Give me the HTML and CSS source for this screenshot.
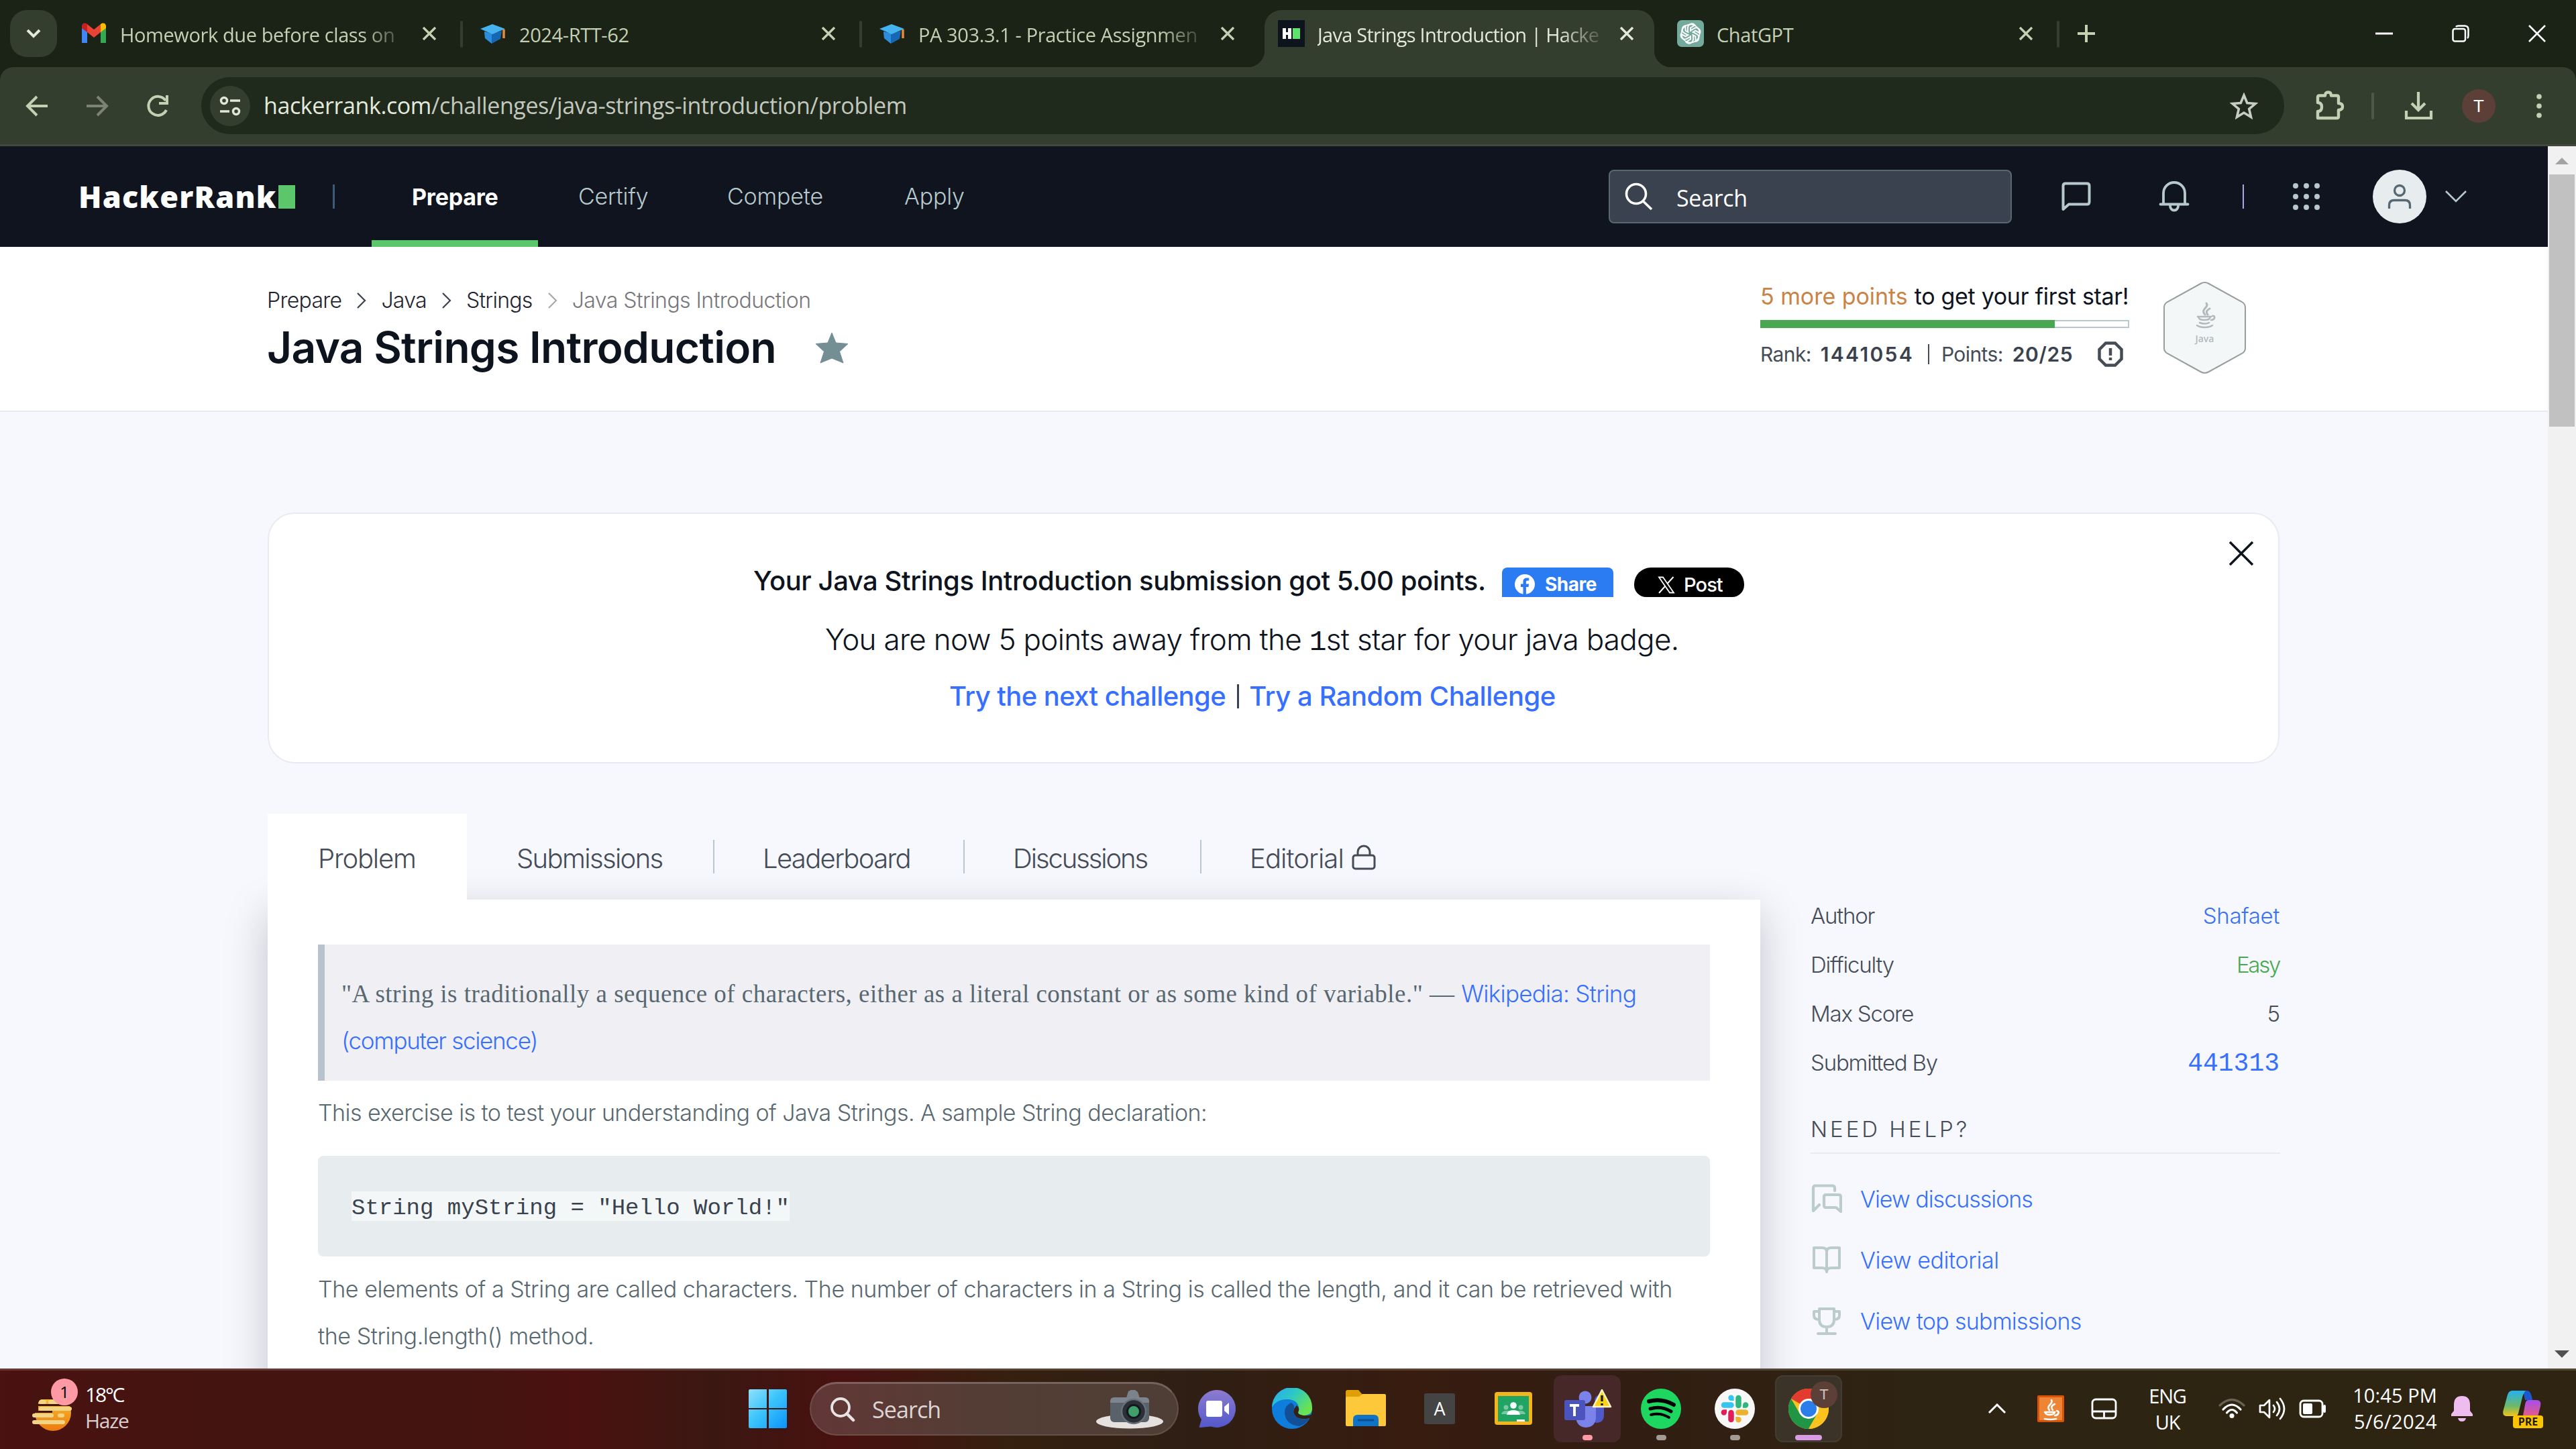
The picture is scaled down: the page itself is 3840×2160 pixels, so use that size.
FILE: index.html
```
<!DOCTYPE html>
<html lang="en">
<head>
<meta charset="utf-8">
<title>Java Strings Introduction | HackerRank</title>
<link rel="stylesheet" href="styles.css">
</head>
<body>
<svg width="0" height="0" class="defs">
  <defs>
    <symbol id="cube" viewBox="0 0 40 40">
      <path d="M7 17 19 20 33 16 31 28 18 35 8 27Z" fill="#1667b4"/>
      <path d="M7 17 18 20 18 35 8 27Z" fill="#2b8ddb"/>
      <path d="M1 13 19 6 38 13 19 21Z" fill="#45b3ee"/>
      <path d="M36 14v13" stroke="#e8883a" stroke-width="3.500"/>
    </symbol>
    <symbol id="close" viewBox="0 0 20 20"><path d="M1 1 19 19M19 1 1 19" stroke="currentColor" stroke-width="3.4"/></symbol>
  </defs>
</svg>

<div class="tabstrip">
  <button class="tab-search"><svg width="22" height="14" viewBox="0 0 22 14"><path d="M2 2 11 11 20 2" fill="none" stroke="#e3e9db" stroke-width="4"/></svg></button>
  <div class="tab">
    <svg class="fav" viewBox="0 0 40 40"><path d="M2 8v26h8V16Z" fill="#4285f4"/><path d="M38 8v26h-8V16Z" fill="#34a853"/><path d="M2 9c0-4 4-6 8-3v12L2 12Z" fill="#c5221f"/><path d="M38 9c0-4-4-6-8-3v12l8-6Z" fill="#fbbc04"/><path d="M10 6 20 14 30 6v12L20 26 10 18Z" fill="#ea4335"/></svg>
    <span class="tab-title fade">Homework due before class on</span><svg class="x"><use href="#close"/></svg>
  </div>
  <div class="tab divided"><svg class="fav"><use href="#cube"/></svg><span class="tab-title">2024-RTT-62</span><svg class="x"><use href="#close"/></svg></div>
  <div class="tab divided"><svg class="fav"><use href="#cube"/></svg><span class="tab-title fade">PA 303.3.1 - Practice Assignmen</span><svg class="x"><use href="#close"/></svg></div>
  <div class="tab active">
    <svg class="fav" viewBox="0 0 40 40"><rect width="40" height="40" fill="#0e141e"/><path d="M7 12h5v6h3v-6h5v16h-5v-6h-3v6H7Z" fill="#fff"/><path d="M22 12h11v16H22Z" fill="#5fe36d"/></svg>
    <span class="tab-title fade">Java Strings Introduction | Hacke</span><svg class="x"><use href="#close"/></svg>
  </div>
  <div class="tab last">
    <svg class="fav" viewBox="0 0 40 40"><rect width="40" height="40" rx="7" fill="#74aa9c"/><g fill="none" stroke="#fff" stroke-width="2"><path id="petal" d="M16 18V11a6 6 0 0 1 10.500-3.500L20 11.500V17"/><use href="#petal" transform="rotate(60 20 20)"/><use href="#petal" transform="rotate(120 20 20)"/><use href="#petal" transform="rotate(180 20 20)"/><use href="#petal" transform="rotate(240 20 20)"/><use href="#petal" transform="rotate(300 20 20)"/><circle cx="20" cy="20" r="13.500" stroke-width="1.600"/></g></svg>
    <span class="tab-title">ChatGPT</span><svg class="x"><use href="#close"/></svg>
  </div>
  <svg class="newtab" width="28" height="28" viewBox="0 0 28 28"><path d="M14 1v26M1 14h26" stroke="#c3d0b4" stroke-width="4"/></svg>
  <div class="winctl">
    <svg width="26" height="26" viewBox="0 0 26 26"><path d="M0 13h26" stroke="#fff" stroke-width="3"/></svg>
    <svg width="26" height="26" viewBox="0 0 26 26"><g fill="none" stroke="#fff" stroke-width="2.500"><rect x="1.500" y="6" width="18.500" height="18.500" rx="3"/><path d="M6 3q1-1.500 4-1.500h9q5.500 0 5.500 5.500v9q0 3-1.500 4"/></g></svg>
    <svg width="26" height="26" viewBox="0 0 26 26"><path d="M1 1 25 25M25 1 1 25" stroke="#fff" stroke-width="2.500"/></svg>
  </div>
</div>

<div class="toolbar-wrap"><div class="toolbar">
  <svg width="40" height="40" viewBox="0 0 40 40"><path d="M36 20H7M20 6 6 20 20 34" fill="none" stroke="#c3d0b4" stroke-width="4"/></svg>
  <svg width="40" height="40" viewBox="0 0 40 40"><path d="M4 20H33M20 6 34 20 20 34" fill="none" stroke="#7b8473" stroke-width="4"/></svg>
  <svg width="40" height="40" viewBox="0 0 40 40"><path d="M33 26A14 14 0 1 1 32 12" fill="none" stroke="#c3d0b4" stroke-width="4"/><path d="M36 4v14H22v-4h10V4Z" fill="#c3d0b4"/></svg>
  <div class="omnibox">
    <span class="site"><svg width="34" height="30" viewBox="0 0 34 30"><g fill="none" stroke="#e0e6d8" stroke-width="3.500"><circle cx="8" cy="7" r="4.500"/><path d="M17 7h15M2 23h14"/><circle cx="26" cy="23" r="4.500"/></g></svg></span>
    <span class="url"><b>hackerrank.com</b>/challenges/java-strings-introduction/problem</span>
    <svg class="star" width="42" height="40" viewBox="0 0 42 40"><path d="M21 4 25.800 15.500 38 16.500 28.700 24.500 31.500 36.500 21 30 10.500 36.500 13.300 24.500 4 16.500 16.200 15.500Z" fill="none" stroke="#c8cdc3" stroke-width="3.600"/></svg>
  </div>
  <svg width="46" height="46" viewBox="0 0 46 46"><path d="M5 10q0-2.500 2.500-2.500H16q0-5 4.500-5t4.500 5h8.500q2.500 0 2.500 2.500v9q6 0 6 5t-6 5v9.500q0 2.500-2.500 2.500H5v-10q6 0 6-6.500T5 18Z" fill="none" stroke="#c3d0b4" stroke-width="4.400" stroke-linejoin="round"/></svg>
  <i class="tb-div"></i>
  <svg width="46" height="42" viewBox="0 0 46 42"><path d="M22 0v26M12 17l10 10 10-10M4 28v11h37V28" fill="none" stroke="#c3d0b4" stroke-width="4.200"/></svg>
  <span class="profile">T</span>
  <svg width="10" height="40" viewBox="0 0 10 40"><g fill="#c3d0b4"><circle cx="5" cy="6" r="3.800"/><circle cx="5" cy="20" r="3.800"/><circle cx="5" cy="34" r="3.800"/></g></svg>
</div></div>

<div class="viewport">
  <main class="page">
    <nav class="nav">
      <div class="logo">HackerRank<i></i></div>
      <i class="nav-div"></i>
      <a class="nav-link on">Prepare</a>
      <a class="nav-link">Certify</a>
      <a class="nav-link">Compete</a>
      <a class="nav-link">Apply</a>
      <div class="search"><svg width="42" height="42" viewBox="0 0 42 42"><g fill="none" stroke="#fff" stroke-width="3.600"><circle cx="17" cy="17" r="14.500"/><path d="M27.500 28 40 40"/></g></svg><span>Search</span></div>
      <svg width="44" height="44" viewBox="0 0 44 44"><path d="M2.500 41V6q0-3.500 3.500-3.500h32q3.500 0 3.500 3.500v24q0 3.500-3.500 3.500H11Z" fill="none" stroke="#b7c9cc" stroke-width="4" stroke-linejoin="round"/></svg>
      <svg width="46" height="46" viewBox="0 0 46 46"><g fill="none" stroke="#b7c9cc" stroke-width="3.800" stroke-linecap="round"><path d="M2.500 34.500h41M7 34V18a16 16 0 0 1 32 0v16M17 37a6 6.500 0 0 0 12 0"/></g></svg>
      <i class="nav-div lilac"></i>
      <svg width="42" height="42" viewBox="0 0 42 42"><g fill="#b7c9cc"><circle cx="5" cy="5" r="4"/><circle cx="21" cy="5" r="4"/><circle cx="37" cy="5" r="4"/><circle cx="5" cy="21" r="4"/><circle cx="21" cy="21" r="4"/><circle cx="37" cy="21" r="4"/><circle cx="5" cy="37" r="4"/><circle cx="21" cy="37" r="4"/><circle cx="37" cy="37" r="4"/></g></svg>
      <span class="avatar"><svg width="36" height="40" viewBox="0 0 36 40"><g fill="none" stroke="#576871" stroke-width="3.300"><circle cx="18" cy="11" r="7.500"/><path d="M2.500 38v-5q0-7.500 7.500-7.500h16q7.500 0 7.500 7.500v5"/></g></svg></span>
      <svg width="34" height="20" viewBox="0 0 34 20"><path d="M2 2 17 17 32 2" fill="none" stroke="#b7c9cc" stroke-width="2.600"/></svg>
    </nav>

    <header class="head">
      <div class="head-left">
        <div class="crumbs">
          <span>Prepare</span><svg viewBox="0 0 14 24"><path d="M1 1 12 12 1 23"/></svg>
          <span>Java</span><svg viewBox="0 0 14 24"><path d="M1 1 12 12 1 23"/></svg>
          <span>Strings</span><svg class="dim" viewBox="0 0 14 24"><path d="M1 1 12 12 1 23"/></svg>
          <span class="dim">Java Strings Introduction</span>
        </div>
        <div class="title"><h1>Java Strings Introduction</h1><svg width="52" height="48" viewBox="0 0 52 48"><path d="M26 2 32 17 50 18.500 37.500 30 43 47 26 40 9 47 14.500 30 2 18.500 20 17Z" fill="#738f93" stroke="#738f93" stroke-linejoin="round"/></svg></div>
      </div>
      <div class="rank">
        <div class="more"><span>5 more points</span><b>to get your first star!</b></div>
        <div class="progress"><i style="width:80.4%"></i></div>
        <div class="stats"><span>Rank:</span><b class="r">1441054</b><i></i><span>Points:</span><b>20/25</b><svg width="38" height="38" viewBox="0 0 38 38"><path d="M12 2.500h14L35.500 12v14L26 35.500H12L2.500 26V12Z" fill="none" stroke="#454c58" stroke-width="4.500"/><path d="M19 10v11M19 24v4" stroke="#454c58" stroke-width="4.500"/></svg></div>
      </div>
      <div class="badge">
        <svg width="127" height="139" viewBox="0 0 127 139"><path d="M58 3.500q5.500-3 11 0L119 31q5 3 5 8v61q0 5-5 8L69 135.500q-5.500 3-11 0L8 108q-5-3-5-8V39q0-5 5-8Z" fill="#f3f7f8" stroke="#999d9e" stroke-width="2"/>
        <g fill="none" stroke="#b4b9bb" stroke-width="2.600" stroke-linecap="round"><path d="M66 33c5 6-10 9-2 17M71 41c-5 3-6 5-3 9" stroke-width="3"/><path d="M53 53h20M54 53c1 4 3 5 9 5s8-1 9-5M75 52c5-1 4 6-2 6M56 62c4 2 11 2 14 0M52 66c6 4 17 4 23 0"/></g></svg>
        <span>Java</span>
      </div>
    </header>

    <section class="banner">
      <div class="banner-lines">
        <p class="l1"><b>Your Java Strings Introduction submission got 5.00 points.</b>
          <span class="fb"><svg width="30" height="30" viewBox="0 0 30 30"><circle cx="15" cy="15" r="15" fill="#fff"/><path d="M12.500 30V19H9v-4.500h3.500V11q0-5.500 5.500-5.500h3.200v4H18.800q-1.900 0-1.900 2v3h4.200L20.500 19h-3.600v11Z" fill="#2b7bf3"/></svg>Share</span>
          <span class="xp"><svg width="26" height="26" viewBox="0 0 26 26"><g fill="none" stroke="#fff"><path d="M2 1.500h6L24 24.500h-6Z" stroke-width="1.800"/><path d="M2 25 11.500 14.500M14.500 11 23.500 1" stroke-width="2"/></g></svg>Post</span></p>
        <p class="l2"><span>You are now 5 points away from the <span class="one">1</span>st star for your java badge.</span></p>
        <p class="l3"><a class="a1">Try the next challenge</a><i></i><a>Try a Random Challenge</a></p>
      </div>
      <svg class="dismiss" width="38" height="38" viewBox="0 0 38 38"><path d="M2 2 36 36M36 2 2 36" stroke="#0e141e" stroke-width="3.500"/></svg>
    </section>

    <div class="tabs">
      <a class="cur">Problem</a>
      <a class="sub">Submissions</a><i></i>
      <a class="lead">Leaderboard</a><i></i>
      <a class="disc">Discussions</a><i></i>
      <a class="edit">Editorial<svg width="36" height="38" viewBox="0 0 36 38"><g fill="none" stroke="#454c58" stroke-width="3"><rect x="2" y="16" width="32" height="20" rx="3.500"/><path d="M9 16v-5a9 9 0 0 1 18 0v5"/></g></svg></a>
    </div>

    <div class="body">
      <article class="card">
        <blockquote><span>"A string is traditionally a sequence of characters, either as a literal constant or as some kind of variable." —</span> <a>Wikipedia: String</a><br><a class="cs">(computer science)</a></blockquote>
        <p class="ex">This exercise is to test your understanding of Java Strings. A sample String declaration:</p>
        <pre><code>String myString = "Hello World!"</code></pre>
        <p class="el">The elements of a String are called characters. The number of characters in a String is called the length, and it can be retrieved with<br>the String.length() method.</p>
      </article>
      <aside class="side">
        <dl>
          <div><dt>Author</dt><dd class="blue s1">Shafaet</dd></div>
          <div><dt>Difficulty</dt><dd class="green">Easy</dd></div>
          <div><dt>Max Score</dt><dd>5</dd></div>
          <div><dt>Submitted By</dt><dd class="blue num">441313</dd></div>
        </dl>
        <h3>NEED HELP?</h3>
        <ul>
          <li><svg viewBox="0 0 46 44"><g fill="none" stroke="#bccccd" stroke-width="4.200" stroke-linejoin="round" stroke-linecap="round"><path d="M35 10V6q0-3.500-3.500-3.500H6Q3 2.500 3 6v34l9-9"/><path d="M44 41V19q0-3-3-3H22q-3 0-3 3v13q0 3 3 3h15Z"/></g></svg><a class="v1">View discussions</a></li>
          <li><svg viewBox="0 0 46 44"><path d="M4 4h12q7 0 7 6 0-6 7-6h12v30H30q-7 0-7 6 0-6-7-6H4ZM23 10v30" fill="none" stroke="#bccccd" stroke-width="4" stroke-linejoin="round"/></svg><a>View editorial</a></li>
          <li><svg viewBox="0 0 46 44"><g fill="none" stroke="#bccccd" stroke-width="4" stroke-linejoin="round" stroke-linecap="round"><path d="M12 4h22v16q0 11-11 11T12 20ZM12 8H4v6q0 6 8 6M34 8h8v6q0 6-8 6M23 31v9M10 41h26"/></g></svg><a class="v3">View top submissions</a></li>
        </ul>
      </aside>
    </div>
  </main>
  <div class="scrollbar"><i class="up"></i><i class="thumb"></i><i class="down"></i></div>
</div>

<footer class="taskbar">
  <div class="weather"><svg width="60" height="66" viewBox="0 0 60 66"><defs><linearGradient id="sun" x1="0" y1="0" x2="0" y2="1"><stop offset="0" stop-color="#f8c62c"/><stop offset="1" stop-color="#ee7a12"/></linearGradient></defs><circle cx="31" cy="36" r="27" fill="url(#sun)"/><g stroke="#f0d488" stroke-width="6" stroke-linecap="round"><path d="M13 20h5M27 20h10M13 30h43M3 40h26M41 40h4M3 50h43" /></g><path d="M0 0h60v16H0ZM0 17h9v18H0ZM0 23h60v3H10ZM0 33h30v3H0Z" fill="#451310"/></svg><b>1</b></div>
  <div class="wtext"><span class="w1">18°C</span><span class="w2">Haze</span></div>
  <svg width="60" height="60" viewBox="0 0 60 60"><defs><linearGradient id="win" x1="0" y1="0" x2="1" y2="1"><stop offset="0" stop-color="#8fe0fc"/><stop offset=".45" stop-color="#3ec5fb"/><stop offset="1" stop-color="#0a93fb"/></linearGradient></defs><path d="M3 1h25v28H1V3q0-2 2-2ZM31 1h25q2 0 2 2v26H31ZM1 31h27v28H3q-2 0-2-2ZM31 31h27v26q0 2-2 2H31Z" fill="url(#win)"/></svg>
  <div class="tsearch"><svg width="38" height="38" viewBox="0 0 38 38"><g fill="none" stroke="#e9e4e4" stroke-width="3.800"><circle cx="16" cy="16" r="13"/><path d="M25.500 25.500 35 35" stroke-width="4.500" stroke-linecap="round"/></g></svg><span>Search</span>
    <svg class="cam" width="102" height="60" viewBox="0 0 102 60"><ellipse cx="51" cy="48" rx="50" ry="10.500" fill="#e6e1df"/><path d="M49 3l4-2h6l4 3 3 9H46Z" fill="#7b828b"/><rect x="22" y="12" width="58" height="37" rx="6" fill="#59616b"/><path d="M22 18q0-6 6-6h46q6 0 6 6v2H22Z" fill="#7e858e"/><circle cx="57" cy="33" r="18" fill="#2b3038" stroke="#69717a" stroke-width="2.500"/><circle cx="57" cy="33" r="9.500" fill="#3fa06a" stroke="#12181b" stroke-width="3"/></svg></div>
  <svg width="60" height="60" viewBox="0 0 60 60"><defs><linearGradient id="chat" x1="0" y1="0" x2="0" y2="1"><stop offset="0" stop-color="#8d7bcf"/><stop offset="1" stop-color="#5358cb"/></linearGradient></defs><path d="M30 2a28 28 0 1 1-10 54.500L4 58q-2 0-1-2l3-10A28 28 0 0 1 30 2Z" fill="url(#chat)"/><rect x="13" y="18" width="24" height="24" rx="3" fill="#fff"/><path d="M40 27l7-6v18l-7-6Z" fill="#fff"/></svg>
  <svg width="62" height="62" viewBox="0 0 62 62"><defs><linearGradient id="edgeA" x1="0" y1="0" x2="1" y2=".6"><stop offset="0" stop-color="#2aa8f5"/><stop offset=".5" stop-color="#2cc8c4"/><stop offset="1" stop-color="#6be34f"/></linearGradient></defs><circle cx="31" cy="31" r="30" fill="#0f7ddb"/><path d="M1 29A30 30 0 0 1 61 29q1 11-12 12-12 0-8-7c2-12-8-18-18-17Q8 17 1 29Z" fill="url(#edgeA)"/><path d="M30 22q-10 4-10 15 1 18 22 20 10-3 15-12-10 4-18-1-9-5-5-14 1-5-4-8Z" fill="#134f96"/><path d="M34 31q-3 8 5 13 8 4 18 1l5 8V39q-10 4-18 1-6-2-3-6 1-5-3-8Z" fill="#342014"/></svg>
  <svg width="60" height="56" viewBox="0 0 60 56"><path d="M0 3q0-3 3-3h16l6 7v10H0Z" fill="#e0a005"/><path d="M0 12q0-2 2-2h18l5-4h33q2 0 2 2v44q0 2-2 2H2q-2 0-2-2Z" fill="#fdc83a"/><path d="M11 54V44q0-7 7-7h24q7 0 7 7v10Z" fill="#0f74c6"/><path d="M19 45h22" stroke="#0b4f93" stroke-width="3" stroke-linecap="round"/></svg>
  <div class="tile">A</div>
  <svg width="56" height="50" viewBox="0 0 56 50"><rect width="56" height="49" rx="4" fill="#f3b51b"/><rect x="5" y="6" width="46" height="38" fill="#1fa463"/><g fill="#7cc8a2"><circle cx="17" cy="23" r="3.500"/><circle cx="39" cy="23" r="3.500"/><path d="M10 33q1-5 8-5h20q7 0 8 5Z"/></g><circle cx="28" cy="20" r="4.800" fill="#fff"/><path d="M18 34q1-7 10-7t10 7Z" fill="#fff"/><path d="M33 41h12v3H33Z" fill="#fff"/></svg>
  <div class="app teams"><svg width="74" height="60" viewBox="0 0 74 60"><circle cx="34" cy="13" r="9.500" fill="#7b83eb"/><circle cx="55" cy="17" r="7" fill="#5059c9"/><path d="M46 26h16v14q0 10-10 11-6 0-6-6Z" fill="#5059c9"/><path d="M20 26h30v16q0 15-15 16-14-1-15-16Z" fill="#7b83eb"/><rect x="3" y="17" width="31" height="30" rx="3" fill="#4b53bc"/><path d="M11 25h14M18 25v16" stroke="#fff" stroke-width="4"/><path d="M59 2 72 27H46Z" fill="#fcd116" stroke="#fbf3c6" stroke-width="2.500" stroke-linejoin="round"/><path d="M59 10v9M59 22v3" stroke="#222" stroke-width="3.500"/></svg><i></i></div>
  <div class="app"><svg width="60" height="60" viewBox="0 0 60 60"><circle cx="30" cy="30" r="30" fill="#1ed760"/><g fill="none" stroke="#000" stroke-linecap="round"><path d="M12 19q19-5 37 5" stroke-width="6"/><path d="M14 30q16-5 31 4" stroke-width="5"/><path d="M15 39q14-4 27 4" stroke-width="4"/></g></svg><i></i></div>
  <div class="app"><svg width="60" height="60" viewBox="0 0 60 60"><circle cx="30" cy="30" r="30" fill="#f7f7f7"/><g stroke-width="8.500" stroke-linecap="round"><path d="M35.500 14v11" stroke="#2eb67d"/><path d="M14 24.500h10.500" stroke="#36c5f0"/><path d="M24.500 36v10" stroke="#e01e5a"/><path d="M35.500 35.500h10.500" stroke="#ecb22e"/></g><path d="M28.700 18h-4.200a4.200 4.200 0 1 1 4.200-4.200Z" fill="#36c5f0"/><path d="M42 28.700v-4.200a4.200 4.200 0 1 1 4.200 4.200Z" fill="#2eb67d"/><path d="M18 31.300v4.200a4.200 4.200 0 1 1-4.200-4.200Z" fill="#e01e5a"/><path d="M31.300 42h4.200a4.200 4.200 0 1 1-4.200 4.200Z" fill="#ecb22e"/></svg><i></i></div>
  <div class="app chrome"><svg width="60" height="60" viewBox="0 0 60 60"><circle cx="30" cy="30" r="30" fill="#fcc31e"/><path d="M30 30 4 15A30 30 0 0 1 56 15H30Z" fill="#e33b2e"/><path d="M30 60A30 30 0 0 1 4 15L17 37.500 30 45 43 37.500Z" fill="#219546"/><path d="M30 15h26a30 30 0 0 1-26 45L43 37.500Z" fill="#fcc31e"/><circle cx="30" cy="30" r="15" fill="#fff"/><circle cx="30" cy="30" r="12" fill="#2b7de9"/></svg><b>T</b><i></i></div>
  <svg width="28" height="16" viewBox="0 0 28 16"><path d="M2 14 14 2 26 14" fill="none" stroke="#fff" stroke-width="3"/></svg>
  <svg width="40" height="40" viewBox="0 0 40 40"><rect width="40" height="40" rx="2" fill="#d9540a"/><rect x="3" y="3" width="34" height="34" fill="#ee8534"/><g fill="none" stroke="#fff" stroke-width="2.600" stroke-linecap="round"><path d="M21 7c4 6-9 8-3 15M26 13c-5 2-6 5-3 9M11 25h15c-1 5-13 5-14 1M29 23c5 1 2 7-3 7M11 35q8 2 17 0"/></g></svg>
  <svg width="40" height="32" viewBox="0 0 40 32"><g fill="none" stroke="#fff" stroke-width="2.800"><rect x="2" y="2" width="35" height="28" rx="5"/><path d="M2 20h35M19.500 20v10"/></g></svg>
  <div class="lang"><span>ENG</span><span>UK</span></div>
  <svg width="42" height="32" viewBox="0 0 42 32"><g fill="none" stroke="#fff" stroke-width="3.200" stroke-linecap="round"><path d="M2 11Q20-6 38 11" stroke="#6a6156"/><path d="M7 17Q20 3 33 17M12.500 22Q20 13 27.500 22"/></g><circle cx="20" cy="26.500" r="3.500" fill="#fff"/></svg>
  <svg width="42" height="36" viewBox="0 0 42 36"><g fill="none" stroke="#fff" stroke-width="2.700" stroke-linejoin="round" stroke-linecap="round"><path d="M2 13v10h6l8 8V5l-8 8ZM22 13q4 5 0 10M27 8q8 10 0 20M32 3q12 15 0 30"/></g></svg>
  <svg width="42" height="30" viewBox="0 0 42 30"><g fill="none" stroke="#fff" stroke-width="2.800"><rect x="2" y="3" width="33" height="24" rx="5"/></g><rect x="6" y="7" width="14" height="16" rx="2" fill="#fff"/><path d="M38 11v8" stroke="#fff" stroke-width="4" stroke-linecap="round"/></svg>
  <div class="clock"><span>10:45 PM</span><span class="date">5/6/2024</span></div>
  <svg width="34" height="40" viewBox="0 0 34 40"><path d="M17 1q12 0 12 13v9l4 5v3H1v-3l4-5v-9Q5 1 17 1ZM11 34h12q-1 5-6 5t-6-5Z" fill="#efbcf0"/></svg>
  <div class="copilot"><svg width="60" height="46" viewBox="0 0 60 46"><defs><linearGradient id="cpA" x1="0" y1="0" x2="0" y2="1"><stop offset="0" stop-color="#22b3f2"/><stop offset=".6" stop-color="#6cb86a"/><stop offset="1" stop-color="#f5c518"/></linearGradient><linearGradient id="cpB" x1="0" y1="0" x2="0" y2="1"><stop offset="0" stop-color="#a44df0"/><stop offset="1" stop-color="#f2606c"/></linearGradient></defs><path d="M30 0h6q6 0 8 14H33Z" fill="#1c59d0"/><path d="M14 0h20q-4 4-6 14l-5 20q-1 4-5 4H6q-8 0-5-10L7 6q2-6 7-6Z" fill="url(#cpA)"/><path d="M38 14h12q8 0 6 9l-5 20H29l4-22q1-7 5-7Z" fill="url(#cpB)"/></svg><b>PRE</b></div>
</footer>
</body>
</html>
```
FILE: styles.css
```
* { box-sizing: border-box; }
body { margin: 0; width: 3840px; height: 2160px; overflow: hidden; background: #f6f8fd; font-family: Inter, "Liberation Sans", sans-serif; white-space: nowrap; }
p, h1, h3, ul, dl, dd, pre, blockquote { margin: 0; padding: 0; }
svg { display: block; flex: none; }
.defs { position: absolute; }

/* Browser tab strip */
.tabstrip { display: flex; align-items: center; height: 100px; background: #1a2315; color: #c3d0b4; font-family: "Open Sans", "Noto Sans", sans-serif; font-size: 29px; }
.tab-search { display: flex; align-items: center; justify-content: center; width: 70px; height: 70px; margin: 0 7.5px 0 15px; padding: 0; border: 0; border-radius: 25px; background: #343e2e; }
.tab { position: relative; display: flex; align-items: center; flex: none; width: 595px; height: 100px; padding-left: 27.5px; }
.fav { width: 40px; height: 40px; margin-right: 19px; }
.tab-title { flex: none; width: 424px; margin-top: 4px; line-height: 44px; letter-spacing: -.4px; }
.active .tab-title { letter-spacing: -.75px; }
.fade { -webkit-mask-image: linear-gradient(90deg, #000 85%, transparent 102%); mask-image: linear-gradient(90deg, #000 85%, transparent 102%); }
.x { width: 20px; height: 20px; margin-left: 26.500px; }
.divided::before, .last::after { content: ""; position: absolute; left: -2px; top: 31px; width: 4px; height: 40px; border-radius: 2px; background: #343e2e; }
.last::after { left: auto; right: -2px; }
.active { color: #e3e9db; }
.active::before { content: ""; position: absolute; z-index: 0; left: 7px; right: 7px; top: 15px; bottom: 0; border-radius: 25px 25px 0 0; background: #343e2e; }
.active::after { content: ""; position: absolute; left: -18px; right: -18px; bottom: 0; height: 25px; background: radial-gradient(circle at 0 0, transparent 25px, #343e2e 25.500px) left / 25px 25px no-repeat, radial-gradient(circle at 100% 0, transparent 25px, #343e2e 25.500px) right / 25px 25px no-repeat; }
.active > * { position: relative; }
.newtab { margin-left: 28px; }
.winctl { display: flex; gap: 88px; margin-left: auto; margin-right: 45px; }

/* Browser toolbar */
.toolbar-wrap { background: #1a2315; }
.toolbar { display: grid; align-items: center; grid-template-columns: 90px 90px 85px 3150px 85px 48px 87px 110px 1fr; height: 118px; padding-left: 35px; border-bottom: 3px solid #43483f; border-radius: 20px 20px 0 0; background: #343e2e; }
.omnibox { display: flex; align-items: center; width: 3105px; height: 85px; padding: 0 39px 0 13px; border-radius: 43px; background: #1f291c; }
.site { display: flex; align-items: center; justify-content: center; width: 60px; height: 60px; border-radius: 50%; background: #343e2e; }
.url { margin: 0 0 1px 20px; color: #c3c8be; font: 34px "Open Sans", "Noto Sans", sans-serif; letter-spacing: -.4px; }
.url b { font-weight: 400; color: #e3e9db; }
.star { margin-left: auto; }
.tb-div { width: 4px; height: 40px; border-radius: 2px; background: #4d5847; }
.profile { width: 50px; height: 50px; border-radius: 50%; background: #5c4038; color: #fff; text-align: center; font: 26px/50px "Liberation Sans", sans-serif; }

/* Page frame */
.viewport { display: flex; height: 1822px; overflow: hidden; }
.page { width: 3798px; height: 1822px; overflow: hidden; }
.scrollbar { display: flex; flex-direction: column; align-items: center; width: 42px; background: #f1f1f1; }
.scrollbar i { display: block; }
.up { margin-top: 17px; border: 10px solid transparent; border-top: 0; border-bottom: 10px solid #a3a3a3; }
.thumb { width: 38px; height: 376px; margin-top: 15px; background: #c1c1c1; }
.down { margin-top: auto; margin-bottom: 16px; border: 11px solid transparent; border-bottom: 0; border-top: 11px solid #505050; }

/* Site navigation */
.nav { display: grid; grid-template-columns: 379px 58px 308px 222px 264px 1050px 675px 145px 125px 74px 120px 107px 1fr; grid-template-rows: 150px; align-items: center; height: 150px; padding-left: 117px; background: #0f141e; color: #b7c9cc; font-size: 34px; font-weight: 300; }
.logo { display: flex; align-items: center; color: #fff; font: 800 45px/60px "Open Sans", sans-serif; letter-spacing: 1.200px; }
.logo i { flex: none; width: 25px; height: 35px; margin-left: 2px; background: #5bc66a; }
.nav-div { width: 3px; height: 36px; background: #3d5b78; }
.nav-div.lilac { background: #a5a9e8; width: 2px; }
.nav-link { line-height: 152px; letter-spacing: -.2px; }
.nav-link.on { width: 248px; height: 150px; padding-left: 60px; border-bottom: 10px solid #5bc66a; color: #fff; font-weight: 700; }
.search { display: flex; align-items: center; width: 601px; height: 80px; padding-left: 22px; border: 2px solid #576871; border-radius: 8px; background: #39424e; color: #fff; font: 34px "Open Sans", sans-serif; letter-spacing: -.3px; }
.search span { margin-left: 35px; margin-top: 3px; }
.avatar { display: flex; align-items: center; justify-content: center; width: 80px; height: 80px; border-radius: 50%; background: #e7ecef; }

/* Challenge heading */
.head { display: flex; height: 246px; padding-left: 398px; border-bottom: 2px solid #e7eaf3; background: #fff; }
.head-left { width: 2226px; padding-top: 60px; }
.crumbs { display: flex; align-items: center; height: 40px; color: #1f2530; font-size: 32px; line-height: 40px; font-weight: 300; letter-spacing: -.7px; }
.crumbs svg { width: 14px; height: 24px; margin: 0 22px 0 23px; fill: none; stroke: #39424e; stroke-width: 2.200px; }
.crumbs svg.dim { stroke: #a9a9ad; }
.crumbs .dim { color: #77777c; letter-spacing: -.55px; }
.title { display: flex; align-items: center; margin-top: 10px; height: 80px; }
.title h1 { width: 816px; color: #0e141e; font-size: 64px; line-height: 80px; font-weight: 600; letter-spacing: -.7px; }
.rank { width: 550px; padding-top: 54px; }
.more { display: flex; height: 40px; line-height: 40px; font-size: 34px; letter-spacing: -.05px; color: #c98347; }
.more b { margin-left: 10px; font-weight: 400; letter-spacing: -.3px; color: #0e141e; }
.progress { height: 12px; margin: 15px 0 19px; border: 2px solid #b7c9cc; }
.progress i { display: block; height: 12px; margin: -2px; background: #49a84f; }
.stats { display: flex; align-items: center; height: 40px; color: #454c58; font-size: 30px; line-height: 40px; letter-spacing: -.6px; }
.stats b { margin: 0 24px 0 14px; color: #39424e; font-weight: 600; letter-spacing: .6px; }
.stats .r { margin-right: 21px; letter-spacing: 2.300px; }
.stats i { width: 2px; height: 30px; margin-right: 18px; background: #454c58; }
.stats svg { margin-left: 13px; }
.badge { position: relative; width: 127px; height: 139px; margin: 51px 0 0 49px; }
.badge span { position: absolute; left: 0; right: 0; top: 76px; text-align: center; color: #b4b9bb; font: 600 14px/20px "Open Sans", sans-serif; }

/* Submission result */
.banner { display: flex; width: 2999px; height: 374px; margin: 150px 0 0 399px; border: 2px solid #e9ebf2; border-radius: 40px; background: #fff; color: #0e141e; }
.banner-lines { width: 2921px; padding-top: 70px; }
.banner-lines p { display: flex; align-items: center; height: 60px; line-height: 60px; }
.l1 { padding-left: 722px; }
.l1 b { width: 1116px; font-size: 40px; font-weight: 500; letter-spacing: -.43px; }
.fb, .xp { display: flex; align-items: center; height: 44px; margin-top: 3px; color: #fff; }
.fb { width: 166px; padding: 6px 0 0 19px; gap: 15px; border-radius: 8px 8px 0 0; background: #2b7bf3; font-size: 28px; font-weight: 700; letter-spacing: -.5px; }
.xp { width: 164px; margin-left: 31px; padding: 8px 0 0 35px; gap: 13px; overflow: hidden; border-radius: 25px 25px 18px 18px; background: #000; font-size: 29px; font-weight: 500; letter-spacing: -.9px; }
.l2 { margin-top: 27px; padding-left: 829px; font-size: 44px; font-weight: 300; letter-spacing: -.7px; }
.one { font: 43px/1 "Liberation Mono", monospace; }
.l3 { margin-top: 25px; padding-left: 1014px; color: #3770ff; font-size: 40px; font-weight: 500; letter-spacing: -.45px; }
.l3 .a1 { letter-spacing: -.6px; }
.l3 i { width: 3px; height: 36px; margin: 0 15px 0 17px; background: #39424e; }
.dismiss { margin-top: 40px; }

/* Tabs */
.tabs { position: relative; z-index: 1; display: grid; grid-template-columns: 371px 293px 74px 299px 74px 279px 74px 400px; grid-template-rows: 128px; align-items: center; width: 2225px; height: 128px; margin: 75px 0 0 399px; color: #454c58; font-size: 40px; font-weight: 300; line-height: 60px; letter-spacing: -1.650px; }
.tabs a { padding-top: 6px; }
.tabs .cur { width: 297px; height: 128px; padding: 37px 0 0 75px; background: #fff; letter-spacing: -1.200px; }
.tabs i { width: 2px; height: 50px; background: #b7c9cc; }
.tabs .disc { letter-spacing: -2.100px; }
.tabs .edit { display: flex; align-items: center; gap: 12px; letter-spacing: -.9px; }
.edit svg { margin-bottom: 4px; }

/* Problem statement */
.body { display: flex; margin-left: 399px; }
.card { width: 2225px; height: 800px; padding: 67px 75px 0; background: #fff; box-shadow: 0 20px 60px rgba(20, 20, 30, .22); color: #576871; font-size: 34px; font-weight: 300; line-height: 70px; }
blockquote { height: 203px; padding: 39px 0 0 25px; border-left: 10px solid #b8c3cb; background: #f0eff4; font: 37px/70px "Liberation Serif", serif; letter-spacing: .48px; }
blockquote a { color: #3770ff; font: 300 35px/1 Inter, sans-serif; letter-spacing: -.75px; }
blockquote .cs { letter-spacing: -1.300px; }
.ex { margin: 13px 0 29px; letter-spacing: -.56px; }
.el { margin-top: 14px; letter-spacing: -.44px; }
pre { display: flex; height: 150px; padding: 53px 0 0 50px; border-radius: 8px; background: #e7ecef; }
code { height: 44px; background: #f3f7f8; color: #39424e; font: 34px/50px "Liberation Mono", monospace; }

/* Sidebar */
.side { width: 700px; margin-left: 75px; color: #454c58; font-size: 33px; font-weight: 300; }
.side dl { display: grid; gap: 25px; }
.side dl div { display: flex; justify-content: space-between; height: 48px; line-height: 49px; letter-spacing: -1.200px; }
.side dd { margin-right: 1px; }
.blue { color: #3770ff; }
.s1 { letter-spacing: -.3px; }
.green { color: #49a84f; letter-spacing: -2.300px; }
.num { font: 38px/52px "Liberation Mono", monospace; letter-spacing: 0; }
.side h3 { margin-top: 50px; padding-bottom: 10px; border-bottom: 2px solid #e7eaee; font-size: 33px; line-height: 50px; font-weight: 300; letter-spacing: 4px; }
.side ul { display: grid; gap: 41px; margin-top: 42px; list-style: none; }
.side li { display: flex; align-items: center; height: 50px; color: #3770ff; font-size: 34px; letter-spacing: -.4px; }
.side li svg { width: 46px; height: 44px; margin: 0 27px 0 1px; }
.v1 { letter-spacing: -1px; }
.v3 { letter-spacing: -.7px; }

/* Windows taskbar */
.taskbar { position: relative; z-index: 2; display: grid; grid-template-columns: 79px 988px 92px 578px 110px 111px 117px 105px 88px 110px 110px 110px 317px 74px 80px 83px 107px 60px 60px 76px 150px 78px 1fr; align-items: center; height: 120px; padding: 0 0 3px 48px; border-top: 3px solid rgba(255, 255, 255, .16); background: linear-gradient(90deg, #4a1210, #441410 300px, #441411 700px, #4a1110 850px, #3b1711 1060px, #481110 1260px, #36200f 1500px, #2f1f14 1750px, #381c10 2100px, #321d12 2400px, #2e2413 2850px, #2e2411); background-origin: border-box; color: #fff; font-family: "Open Sans", "Noto Sans", sans-serif; font-size: 29px; }
.weather { position: relative; height: 76px; padding-top: 8px; }
.weather b { position: absolute; left: 28px; top: -7px; width: 40px; height: 40px; border-radius: 50%; background: #ff99a4; color: #000; text-align: center; font-weight: 400; font-size: 24px; line-height: 40px; }
.wtext span, .lang span, .clock span { display: block; line-height: 39px; }
.wtext { margin-top: -4px; font-size: 30px; }
.w1 { letter-spacing: -2.200px; }
.w2 { letter-spacing: -1.300px; color: #d8cfce; }
.tsearch { display: flex; align-items: center; width: 550px; height: 80px; padding: 0 20px 0 28px; border: 2px solid rgba(255, 255, 255, .1); border-top: 3px solid rgba(255, 255, 255, .2); border-radius: 40px; background: linear-gradient(90deg, #613736, #543d35 45%, #4e3e35); }
.tsearch span { margin: 1px 0 0 25px; font-size: 34px; letter-spacing: -.9px; color: #ddd5d3; }
.cam { margin-left: auto; }
.tile { width: 46px; height: 46px; border-radius: 3px; background: #444; text-align: center; font-size: 27px; line-height: 46px; }
.app { position: relative; display: flex; align-items: center; justify-content: center; width: 100px; height: 100px; border-radius: 12px; }
.app i { position: absolute; bottom: 3px; left: 43px; width: 15px; height: 8px; border-radius: 4px; background: #a39a94; }
.teams { background: #462828; }
.teams i { background: #ff99a4; }
.chrome { border: 2px solid #443c31; background: #3b3328; }
.chrome i { left: 28px; width: 40px; bottom: 1px; background: #d99be6; }
.chrome b { position: absolute; left: 51px; top: 7px; width: 40px; height: 40px; border-radius: 50%; background: #5c4038; color: #cfc4c0; text-align: center; font: 22px/40px "Liberation Sans", sans-serif; }
.lang { width: 62px; text-align: center; letter-spacing: -1.200px; }
.clock { width: 130px; margin-top: -3px; text-align: right; letter-spacing: .1px; }
.clock .date { letter-spacing: .4px; }
.copilot { position: relative; height: 58px; padding-top: 2px; width: 60px; }
.copilot b { position: absolute; right: 0; bottom: 0; width: 45px; height: 19px; border-radius: 4px; background: #fdc500; color: #1d1a10; text-align: center; font-size: 16px; line-height: 19px; }
```
